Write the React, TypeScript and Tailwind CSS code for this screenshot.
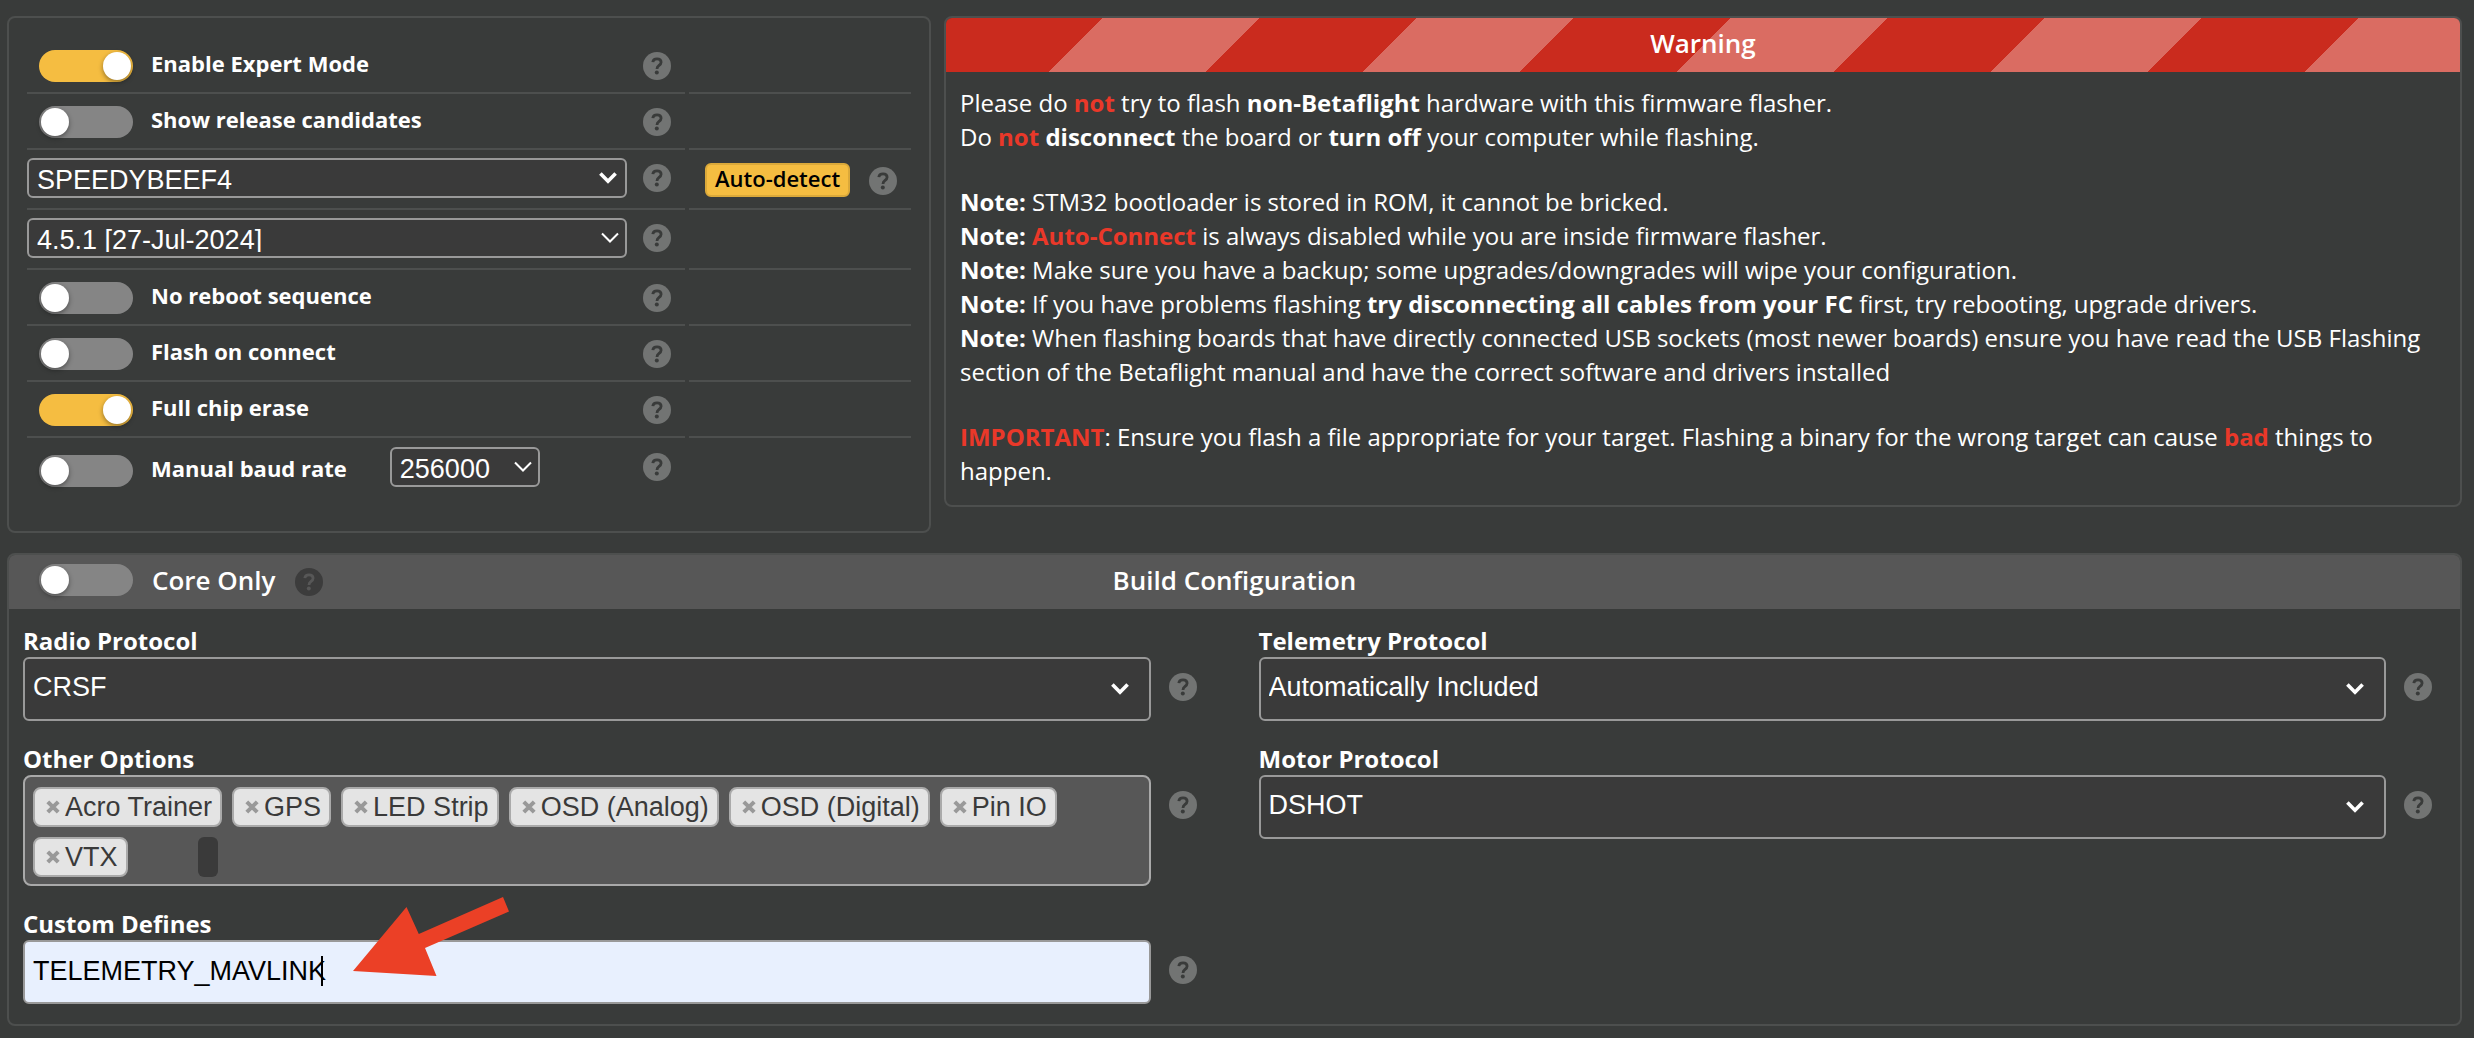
import { useState } from "react";
import type { ReactNode } from "react";
import clsx from "clsx";

/**
 * Firmware flasher tab: flashing options, the warning box and the
 * cloud build configuration below them.
 */

// ── Data ──────────────────────────────────────────────────────────────────────

const BUILD_OPTIONS = [
  "Acro Trainer",
  "GPS",
  "LED Strip",
  "OSD (Analog)",
  "OSD (Digital)",
  "Pin IO",
  "VTX",
];

// ── Icons ─────────────────────────────────────────────────────────────────────

function Help({ topic, dark, className }: { topic: string; dark?: boolean; className?: string }) {
  return (
    <button type="button" aria-label={`Help: ${topic}`} className={clsx("block size-7 shrink-0", className)}>
      <svg viewBox="0 0 28 28" className="size-7" aria-hidden="true">
        <circle cx="14" cy="14" r="14" className={dark ? "fill-[#3c3c3c]" : "fill-[#727473]"} />
        <path
          d="M9.8 10.1C10.1 8 11.7 6.9 14 6.9c2.5 0 4.1 1.3 4.1 3.3 0 1.7-1 2.5-2.3 3.5-1.3 1-1.8 1.6-1.8 3.2"
          fill="none"
          strokeWidth="2.8"
          className={dark ? "stroke-[#575757]" : "stroke-[#393b3a]"}
        />
        <circle cx="13.8" cy="20.6" r="2" className={dark ? "fill-[#575757]" : "fill-[#393b3a]"} />
      </svg>
    </button>
  );
}

function Chevron({ thin, className }: { thin?: boolean; className: string }) {
  return (
    <svg
      viewBox="0 0 18 12"
      aria-hidden="true"
      className={clsx("pointer-events-none absolute top-1/2 h-3 w-[18px] -translate-y-1/2", className)}
    >
      <path
        d={thin ? "M1 1.5l8 8 8-8" : "M1.4 1.4L9 9.2l7.6-7.8"}
        fill="none"
        stroke="#fff"
        strokeWidth={thin ? 2 : 3.6}
      />
    </svg>
  );
}

// ── Form controls ─────────────────────────────────────────────────────────────

function Switch({ id, on }: { id: string; on?: boolean }) {
  return (
    <input
      id={id}
      type="checkbox"
      defaultChecked={on}
      className="h-8 w-[94px] shrink-0 appearance-none rounded-full bg-[#858585] p-0.5 before:block before:size-7 before:rounded-full before:bg-white before:shadow-[0_2px_5px_rgba(0,0,0,0.4)] checked:bg-[#f5bd41] checked:before:ml-[62px]"
    />
  );
}

function Select({
  id,
  label,
  value,
  thin,
  className,
  chevron,
}: {
  id: string;
  label?: string;
  value: string;
  thin?: boolean;
  className: string;
  chevron: string;
}) {
  return (
    <div className={clsx("relative", className)}>
      <select
        id={id}
        aria-label={label}
        className="size-full appearance-none rounded-md border-2 border-[#999] bg-[#3a3a3a] pb-1 pl-2 font-['Liberation_Sans',sans-serif] text-[27px] text-white"
      >
        <option>{value}</option>
      </select>
      <Chevron thin={thin} className={chevron} />
    </div>
  );
}

// ── Option rows ───────────────────────────────────────────────────────────────

function Row({
  topic,
  children,
  aside,
  last,
  tall,
}: {
  topic: string;
  children: ReactNode;
  aside?: ReactNode;
  last?: boolean;
  tall?: boolean;
}) {
  const cell = clsx(
    "flex items-center pb-2.5",
    last ? "pt-[9px]" : "border-b-2 border-[#4d4f4e]",
    !last && (tall ? "pt-2" : "pt-3"),
  );
  return (
    <div className="grid grid-cols-[1fr_222px] gap-x-1">
      <div className={clsx(cell, "pr-3.5")}>
        <div className="flex min-w-0 flex-1 items-end">{children}</div>
        <Help topic={topic} className="ml-4" />
      </div>
      <div className={clsx(cell, "pl-4")}>{aside}</div>
    </div>
  );
}

function SwitchLabel({ id, on, children }: { id: string; on?: boolean; children: string }) {
  return (
    <div className="flex items-center pl-3">
      <Switch id={id} on={on} />
      <label htmlFor={id} className="pb-1.5 pl-[18px] text-[22px] leading-[26px] font-bold whitespace-nowrap">
        {children}
      </label>
    </div>
  );
}

function SwitchRow({ id, on, label }: { id: string; on?: boolean; label: string }) {
  return (
    <Row topic={label}>
      <SwitchLabel id={id} on={on}>
        {label}
      </SwitchLabel>
    </Row>
  );
}

function FlashOptions() {
  return (
    <section className="rounded-lg border-2 border-[#4d4f4e] px-[18px] pt-5 pb-[34px]">
      <SwitchRow id="expert" label="Enable Expert Mode" on />
      <SwitchRow id="candidates" label="Show release candidates" />
      <Row
        topic="Board"
        tall
        aside={
          <div className="flex items-center pt-1">
            <button
              type="button"
              className="h-[34px] rounded-md border-2 border-[#dba93a] bg-[#f5bd41] px-2 text-[22px] leading-[26px] font-semibold text-black"
            >
              <span className="block pb-1.5">Auto-detect</span>
            </button>
            <Help topic="Auto-detect" className="mt-0.5 ml-[19px]" />
          </div>
        }
      >
        <Select id="board" label="Board" value="SPEEDYBEEF4" className="h-10 w-full" chevron="right-2.5" />
      </Row>
      <Row topic="Firmware version" tall>
        <Select
          id="version"
          label="Firmware version"
          value="4.5.1 [27-Jul-2024]"
          thin
          className="h-10 w-full"
          chevron="right-2"
        />
      </Row>
      <SwitchRow id="no-reboot" label="No reboot sequence" />
      <SwitchRow id="flash-connect" label="Flash on connect" />
      <SwitchRow id="chip-erase" label="Full chip erase" on />
      <Row topic="Manual baud rate" last>
        <SwitchLabel id="manual-baud">Manual baud rate</SwitchLabel>
        <Select id="baud" label="Baud rate" value="256000" thin className="ml-[43px] h-10 w-[150px]" chevron="right-2" />
      </Row>
    </section>
  );
}

// ── Warning ───────────────────────────────────────────────────────────────────

function Alert({ children }: { children: string }) {
  return <strong className="text-[#ea3829]">{children}</strong>;
}

function Warning() {
  return (
    <section className="overflow-hidden rounded-lg border-2 border-[#4d4f4e]">
      <h2 className="flex h-[54px] items-center justify-center bg-[repeating-linear-gradient(135deg,#ca2b1e_0_111px,#da6c62_111px_222px)] pb-1 text-[26px] font-semibold">
        Warning
      </h2>
      <div className="flex flex-col gap-[31px] px-3.5 pt-3.5 pb-[17px] text-[24px] leading-[34px]">
        <div>
          <p>
            Please do <Alert>not</Alert> try to flash <strong>non-Betaflight</strong> hardware with this
            firmware flasher.
          </p>
          <p>
            Do <Alert>not</Alert> <strong>disconnect</strong> the board or <strong>turn off</strong> your
            computer while flashing.
          </p>
        </div>
        <div>
          <p>
            <strong>Note:</strong> STM32 bootloader is stored in ROM, it cannot be bricked.
          </p>
          <p>
            <strong>Note:</strong> <Alert>Auto-Connect</Alert> is always disabled while you are inside
            firmware flasher.
          </p>
          <p>
            <strong>Note:</strong> Make sure you have a backup; some upgrades/downgrades will wipe your
            configuration.
          </p>
          <p>
            <strong>Note:</strong> If you have problems flashing{" "}
            <strong>try disconnecting all cables from your FC</strong> first, try rebooting, upgrade
            drivers.
          </p>
          <p>
            <strong>Note:</strong> When flashing boards that have directly connected USB sockets (most
            newer boards) ensure you have read the USB Flashing section of the Betaflight manual and have
            the correct software and drivers installed
          </p>
        </div>
        <p>
          <Alert>IMPORTANT</Alert>: Ensure you flash a file appropriate for your target. Flashing a binary
          for the wrong target can cause <Alert>bad</Alert> things to happen.
        </p>
      </div>
    </section>
  );
}

// ── Build configuration ───────────────────────────────────────────────────────

function Field({ id, label, children }: { id: string; label: string; children: ReactNode }) {
  return (
    <div>
      <label htmlFor={id} className="block text-[24px] leading-[33px] font-bold">
        {label}
      </label>
      <div className="flex items-start gap-[18px]">
        <div className="min-w-0 flex-1">{children}</div>
        <Help topic={label} className="mt-4" />
      </div>
    </div>
  );
}

function OptionTags() {
  const [tags, setTags] = useState(BUILD_OPTIONS);
  return (
    <div className="flex flex-wrap gap-2.5 rounded-lg border-2 border-[#a9a9a9] bg-[#575757] px-2 pt-2.5 pb-[7px] font-['Liberation_Sans',sans-serif] text-[27px] leading-9 text-[#3a3a3a]">
      {tags.map((tag) => (
        <span key={tag} className="flex items-center gap-[5px] rounded-lg border-2 border-[#aaa] bg-[#e4e4e4] pr-2 pl-[11px]">
          <button
            type="button"
            aria-label={`Remove ${tag}`}
            onClick={() => setTags(tags.filter((t) => t !== tag))}
          >
            <svg viewBox="0 0 14 14" className="size-3.5" aria-hidden="true">
              <path d="M1.800 1.800l10.400 10.400M12.200 1.800L1.800 12.200" stroke="#999" strokeWidth="4" />
            </svg>
          </button>
          {tag}
        </span>
      ))}
      <input id="options" type="text" className="ml-[60px] h-10 w-5 rounded-md bg-[#3a3a3a] text-white" />
    </div>
  );
}

function Arrow() {
  return (
    <svg
      viewBox="0 0 156 79"
      aria-hidden="true"
      className="pointer-events-none absolute -top-[43px] left-[330px] h-[79px] w-[156px]"
    >
      <path d="M0 74L53.500 10l12.300 27L150 0l6 14.500L72 51l11.500 28z" fill="#eb4026" />
    </svg>
  );
}

function BuildConfiguration() {
  return (
    <section className="overflow-hidden rounded-lg border-2 border-[#4d4f4e]">
      <div className="grid h-[54px] grid-cols-[1fr_auto_1fr] items-center bg-[#575757] pb-1 text-[26px] font-semibold">
        <div className="flex items-center pl-[30px]">
          <Switch id="core-only" />
          <label htmlFor="core-only" className="pl-[19px]">
            Core Only
          </label>
          <Help topic="Core Only" dark className="mt-1 ml-5" />
        </div>
        <h2>Build Configuration</h2>
      </div>
      <div className="grid grid-cols-2 gap-x-[62px] gap-y-[21px] pt-[15px] pr-7 pb-5 pl-3.5">
        <Field id="radio" label="Radio Protocol">
          <Select id="radio" value="CRSF" className="h-16" chevron="right-[22px]" />
        </Field>
        <Field id="telemetry" label="Telemetry Protocol">
          <Select id="telemetry" value="Automatically Included" className="h-16" chevron="right-[22px]" />
        </Field>
        <Field id="options" label="Other Options">
          <OptionTags />
        </Field>
        <Field id="motor" label="Motor Protocol">
          <Select id="motor" value="DSHOT" className="h-16" chevron="right-[22px]" />
        </Field>
        <Field id="defines" label="Custom Defines">
          <div className="relative">
            <input
              id="defines"
              type="text"
              defaultValue="TELEMETRY_MAVLINK"
              className="block h-16 w-full rounded-md border-2 border-[#999] bg-[#e8f0fe] px-2 pb-0.5 font-['Liberation_Sans',sans-serif] text-[27px] text-black"
            />
            {/* text cursor */}
            <span className="absolute top-4 left-[298px] h-[30px] w-0.5 bg-black" />
            <Arrow />
          </div>
        </Field>
      </div>
    </section>
  );
}

// ── Main component ────────────────────────────────────────────────────────────

export default function App() {
  return (
    <main className="min-h-screen bg-[#393b3a] pt-4 pr-3 pb-3 pl-[7px] font-['Open_Sans',sans-serif] text-white">
      <div className="mb-5 grid grid-cols-[154fr_253fr] items-start gap-x-[13px]">
        <FlashOptions />
        <Warning />
      </div>
      <BuildConfiguration />
    </main>
  );
}
